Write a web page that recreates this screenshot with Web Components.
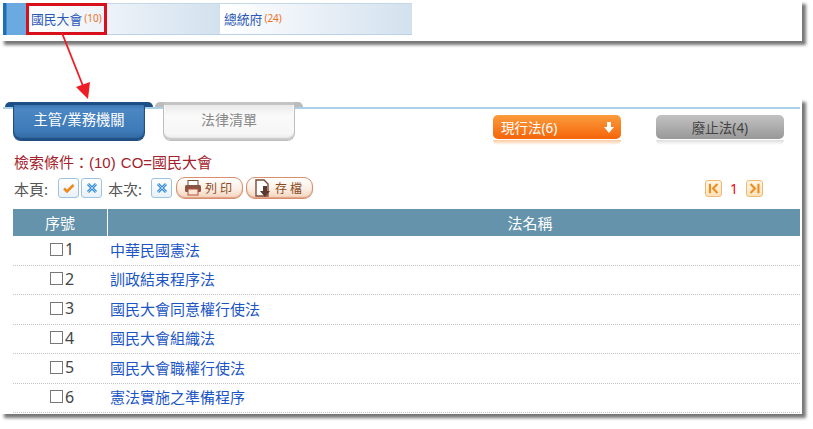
<!DOCTYPE html>
<html lang="zh-Hant">
<head>
<meta charset="utf-8">
<title>法律清單</title>
<style>
  html, body { margin: 0; padding: 0; background: #fff; }
  body { font-family: "Noto Sans", "Noto Sans CJK TC", sans-serif; width: 813px; height: 429px; overflow: hidden; }
</style>
</head>
<body>
<law-page>
  <agency-bar>
    <agency-item selected count="10">國民大會</agency-item>
    <agency-item count="24">總統府</agency-item>
  </agency-bar>
  <law-panel>
    <panel-tabs>
      <panel-tab active>主管/業務機關</panel-tab>
      <panel-tab>法律清單</panel-tab>
    </panel-tabs>
    <status-button slot="status" kind="on">現行法(6)</status-button>
    <status-button slot="status">廢止法(4)</status-button>
    <search-tools slot="tools"></search-tools>
    <law-table slot="table">
      <law-row num="1">中華民國憲法</law-row>
      <law-row num="2">訓政結束程序法</law-row>
      <law-row num="3">國民大會同意權行使法</law-row>
      <law-row num="4">國民大會組織法</law-row>
      <law-row num="5">國民大會職權行使法</law-row>
      <law-row num="6">憲法實施之準備程序</law-row>
    </law-table>
  </law-panel>
</law-page>

<script>
const FONT = '"Noto Sans", "Noto Sans CJK TC", sans-serif';

class LawPage extends HTMLElement {
  constructor() {
    super();
    this.attachShadow({ mode: 'open' });
    this.shadowRoot.innerHTML = `
      <style>
        :host { display: block; position: relative; width: 813px; height: 429px; }
        .arrow { position: absolute; left: 0; top: 0; pointer-events: none; z-index: 5; }
      </style>
      <slot></slot>
      <svg class="arrow" width="813" height="429">
        <line x1="62" y1="33" x2="83" y2="86" stroke="#ee1c25" stroke-width="1.8"/>
        <polygon points="88,99 76,87 90,82" fill="#ee1c25"/>
      </svg>
    `;
  }
}

class AgencyBar extends HTMLElement {
  constructor() {
    super();
    this.attachShadow({ mode: 'open' });
    this.shadowRoot.innerHTML = `
      <style>
        :host {
          display: block; box-sizing: border-box; width: 802px; height: 41px;
          margin-bottom: 57px; padding: 3px 0 0 3px; background: #fff;
          box-shadow: 4px 4px 3px #777;
        }
        .bar {
          display: flex; width: 409px; height: 32px;
          background: #dfe9f3; box-shadow: inset 0 -2px 1px #bcd2e6, inset 0 1px 0 #c4d7e8;
        }
        .stripe {
          width: 23px; flex: none; height: 32px;
          background: linear-gradient(to right, #1f6fb5 0, #1f6fb5 3px, #6aaae0 4px, #6aaae0 100%);
        }
      </style>
      <div class="bar"><div class="stripe"></div><slot></slot></div>
    `;
  }
}

class AgencyItem extends HTMLElement {
  constructor() {
    super();
    this.attachShadow({ mode: 'open' });
    this.shadowRoot.innerHTML = `
      <style>
        :host {
          display: flex; align-items: center; box-sizing: border-box;
          width: 194px; height: 30px; margin-top: 1px; padding: 0 0 2px 5px; font-size: 12.8px; color: #2a58b8;
          font-family: ${FONT};
          background: linear-gradient(to right, #fff 0, #f2f6fa 30%, #d3e1ee 100%);
        }
        :host(:last-child) { width: 192px; padding-left: 4px; }
        .n { font-size: 10px; color: #f0701e; margin-left: 2px; }
        .wrap { position: relative; display: flex; align-items: center; height: 100%; }
        .sel { position: absolute; left: -5px; top: -1px; width: 75px; height: 26px; border: 3px solid #d8101c; display: none; }
        :host([selected]) .sel { display: block; }
      </style>
      <div class="wrap"><slot></slot><span class="n"></span><div class="sel"></div></div>
    `;
  }
  connectedCallback() {
    this.shadowRoot.querySelector('.n').textContent = `(${this.getAttribute('count')})`;
  }
}

class LawPanel extends HTMLElement {
  constructor() {
    super();
    this.attachShadow({ mode: 'open' });
    this.shadowRoot.innerHTML = `
      <style>
        :host {
          display: block; box-sizing: border-box; width: 802px; height: 316px;
          background: #fff; box-shadow: 4px 4px 3px #777; position: relative;
        }
        .top { display: flex; justify-content: space-between; align-items: flex-start; height: 56px; padding-top: 4px; box-sizing: border-box; }
        .status { display: flex; gap: 35px; padding: 13px 18px 0 0; }
        .tools { padding-left: 14px; }
        .table { padding-top: 10px; padding-left: 13px; }
      </style>
      <div class="top">
        <slot></slot>
        <div class="status"><slot name="status"></slot></div>
      </div>
      <div class="tools"><slot name="tools"></slot></div>
      <div class="table"><slot name="table"></slot></div>
    `;
  }
}

class PanelTabs extends HTMLElement {
  constructor() {
    super();
    this.attachShadow({ mode: 'open' });
    this.shadowRoot.innerHTML = `
      <style>
        :host { display: flex; gap: 18px; padding-left: 13px; position: relative; }
        .rule { position: absolute; left: 3px; top: 5px; width: 797px; height: 2px; background: #a9cfe9; }
        ::slotted(*) { position: relative; }
      </style>
      <div class="rule"></div>
      <slot></slot>
    `;
  }
}

class PanelTab extends HTMLElement {
  constructor() {
    super();
    this.attachShadow({ mode: 'open' });
    this.shadowRoot.innerHTML = `
      <style>
        :host {
          display: flex; align-items: center; justify-content: center; box-sizing: border-box;
          position: relative; width: 132px; height: 39px; padding-bottom: 5px;
          font-family: ${FONT}; font-size: 14px; color: #888;
          background: linear-gradient(to bottom, #e4e4e4 0, #fafafa 35%, #f6f6f6 85%, #e6e6e6 100%);
          border: 1px solid #bdbdbd; border-top: 0; border-radius: 0 0 8px 8px;
          box-shadow: inset 0 -2px 1px #c9c9c9, inset 0 0 0 1px #fff;
        }
        :host([active]) {
          color: #fff; font-size: 14.3px;
          background: linear-gradient(to bottom, #2f6aa6 0, #4b87c2 20%, #3d7ab8 75%, #30689f 100%);
          border-color: #1f4f85;
          box-shadow: inset 0 -2px 1px #1f4f85;
        }
        .ear { position: absolute; top: 0; height: 5px; width: 9px; background: #bcbcbc; }
        .l { left: -9px; border-radius: 7px 0 0 0; }
        .r { right: -9px; border-radius: 0 7px 0 0; }
        :host([active]) .ear { background: #1d4f86; }
        .cap { position: absolute; left: 0; right: 0; top: 0; height: 3px; background: #c4c4c4; }
        :host([active]) .cap { background: #1d4f86; }
      </style>
      <span class="ear l"></span><span class="cap"></span><span class="ear r"></span>
      <slot></slot>
    `;
  }
}

class StatusButton extends HTMLElement {
  constructor() {
    super();
    this.attachShadow({ mode: 'open' });
    this.shadowRoot.innerHTML = `
      <style>
        :host {
          display: flex; align-items: center; box-sizing: border-box; position: relative;
          width: 128px; height: 24px; border-radius: 5px;
          font-family: ${FONT}; font-size: 13.5px; color: #444; justify-content: center;
          background: linear-gradient(to bottom, #c2c2c2, #989898);
        }
        :host([kind="on"]) {
          color: #fff; justify-content: flex-start; padding-left: 8px;
          background: linear-gradient(to bottom, #fb9c3c, #f5650a);
        }
        :host::after {
          content: ""; position: absolute; left: 0; right: 0; top: 25px; height: 5px;
          border-radius: 0 0 5px 5px;
          background: linear-gradient(to bottom, #ddd, #fff);
        }
        :host([kind="on"])::after { background: linear-gradient(to bottom, #fbc9a0, #fff); }
        svg { position: absolute; right: 7px; top: 7px; display: none; }
        :host([kind="on"]) svg { display: block; }
      </style>
      <slot></slot>
      <svg width="10" height="11"><path d="M3 0h4v5h3l-5 6-5-6h3z" fill="#fff"/></svg>
    `;
  }
}

class IconButton extends HTMLElement {
  constructor() {
    super();
    this.attachShadow({ mode: 'open' });
    const icons = {
      check: `<path d="M3 8.5l3 3L12.5 5" fill="none" stroke="#ef8a1e" stroke-width="2.6"/>`,
      cross: `<path d="M4 4l8 8M12 4l-8 8" fill="none" stroke="#3d8ed6" stroke-width="3"/><path d="M4 4l8 8M12 4l-8 8" fill="none" stroke="#9fd0f2" stroke-width="1"/>`
    };
    this.shadowRoot.innerHTML = `
      <style>
        :host {
          display: inline-flex; align-items: center; justify-content: center; box-sizing: border-box;
          width: 21px; height: 20px; border: 1px solid #9cc3e4; border-radius: 3px;
          background: linear-gradient(to bottom, #fff, #e8f1f9);
        }
      </style>
      <svg width="16" height="16">${icons[this.getAttribute('icon')]}</svg>
    `;
  }
}

class ActionButton extends HTMLElement {
  constructor() {
    super();
    this.attachShadow({ mode: 'open' });
    const icons = {
      print: `<rect x="4" y="1.5" width="10" height="5" fill="#fff" stroke="#7a4a35"/><rect x="1" y="6" width="16" height="7" rx="1.5" fill="#8a5240"/><rect x="4" y="10" width="10" height="6" fill="#fde3d8" stroke="#b0523a"/>`,
      save: `<path d="M2 1h8l4 4v12H2z" fill="#fff" stroke="#7a4a35" stroke-width="1.4"/><path d="M9 7h4v5h3l-5 6-5-6h3z" fill="#5a3a2c"/>`
    };
    this.shadowRoot.innerHTML = `
      <style>
        :host {
          display: inline-flex; align-items: center; gap: 3px; box-sizing: border-box;
          height: 22px; width: 67px; padding-left: 7px; border: 1px solid #d98f6f; border-radius: 9px;
          font-family: ${FONT}; font-size: 12px; letter-spacing: 3px; color: #8a4a1e; white-space: nowrap;
          background: linear-gradient(to bottom, #fff, #fbeee4 55%, #f5d3bd);
          box-shadow: inset 0 -1px 1px #e0a284;
        }
        svg { flex: none; }
      </style>
      <svg width="18" height="18">${icons[this.getAttribute('icon')]}</svg><slot></slot>
    `;
  }
}

class PagerIcon extends HTMLElement {
  constructor() {
    super();
    this.attachShadow({ mode: 'open' });
    const d = this.getAttribute('dir') === 'last'
      ? 'M4 4l5 5-5 5M13 3.5v11'
      : 'M13 4L8 9l5 5M4.5 3.5v11';
    this.shadowRoot.innerHTML = `
      <style>
        :host {
          display: inline-flex; align-items: center; justify-content: center; box-sizing: border-box;
          width: 17px; height: 17px; border: 1px solid #f2b870; border-radius: 3px;
          background: linear-gradient(to bottom, #fff6e6, #fde3bd);
        }
      </style>
      <svg width="17" height="17" viewBox="0 0 17 18"><path d="${d}" fill="none" stroke="#f08c1e" stroke-width="2.4"/></svg>
    `;
  }
}

class SearchTools extends HTMLElement {
  constructor() {
    super();
    this.attachShadow({ mode: 'open' });
    this.shadowRoot.innerHTML = `
      <style>
        :host { display: block; font-family: ${FONT}; color: #555; width: 788px; }
        .cond {
          color: #a3212a; height: 18px; line-height: 18px; margin-bottom: 5px; white-space: nowrap;
          font-family: "Liberation Sans", "Noto Sans CJK TC", sans-serif; font-size: 15px; word-spacing: 1px;
        }
        .row { display: flex; align-items: center; height: 22px; font-size: 15px; }
        .lbl { width: 44px; white-space: nowrap; }
        .gap { margin-left: 2px; }
        .next { margin-left: 6px; width: 43px; }
        .act { margin-left: 4px; }
        .act + .act { margin-left: 3px; }
        .pager { margin-left: auto; margin-right: 39px; display: flex; align-items: center; gap: 8px; color: #f00; font-size: 14px; }
      </style>
      <div class="cond">檢索條件：(10) CO=國民大會</div>
      <div class="row">
        <span class="lbl">本頁:</span>
        <icon-button icon="check"></icon-button>
        <icon-button class="gap" icon="cross"></icon-button>
        <span class="lbl next">本次:</span>
        <icon-button icon="cross"></icon-button>
        <action-button class="act" icon="print">列印</action-button>
        <action-button class="act" icon="save">存檔</action-button>
        <div class="pager"><pager-icon dir="first"></pager-icon><span>1</span><pager-icon dir="last"></pager-icon></div>
      </div>
    `;
  }
}

class LawTable extends HTMLElement {
  constructor() {
    super();
    this.attachShadow({ mode: 'open' });
    this.shadowRoot.innerHTML = `
      <style>
        :host { display: block; width: 787px; font-family: ${FONT}; }
        .head { display: grid; grid-template-columns: 94px 1fr; height: 27px; background: #6593ac; color: #fff; font-size: 15px; }
        .head span { display: flex; align-items: center; justify-content: center; }
        .head span + span { border-left: 1px solid #fff; padding-left: 152px; }
      </style>
      <div class="head"><span>序號</span><span>法名稱</span></div>
      <slot></slot>
    `;
  }
}

class LawRow extends HTMLElement {
  constructor() {
    super();
    this.attachShadow({ mode: 'open' });
    this.shadowRoot.innerHTML = `
      <style>
        :host {
          display: grid; grid-template-columns: 98px 1fr; align-items: center; box-sizing: border-box;
          height: 29.5px; padding-bottom: 2px; border-bottom: 1px dotted #c4c4c4; font-size: 15px; color: #1c56c4;
        }
        .num { display: flex; align-items: center; padding-left: 37px; color: #444; font-size: 16px; gap: 2px; }
        .box { width: 11px; height: 11px; border: 1px solid #777; }
        .txt { margin-left: -1px; }
      </style>
      <div class="num"><span class="box"></span><span class="v"></span></div>
      <div class="txt"><slot></slot></div>
    `;
  }
  connectedCallback() {
    this.shadowRoot.querySelector('.v').textContent = this.getAttribute('num');
  }
}

customElements.define('law-page', LawPage);
customElements.define('agency-bar', AgencyBar);
customElements.define('agency-item', AgencyItem);
customElements.define('law-panel', LawPanel);
customElements.define('panel-tabs', PanelTabs);
customElements.define('panel-tab', PanelTab);
customElements.define('status-button', StatusButton);
customElements.define('icon-button', IconButton);
customElements.define('action-button', ActionButton);
customElements.define('pager-icon', PagerIcon);
customElements.define('search-tools', SearchTools);
customElements.define('law-table', LawTable);
customElements.define('law-row', LawRow);
</script>
</body>
</html>
